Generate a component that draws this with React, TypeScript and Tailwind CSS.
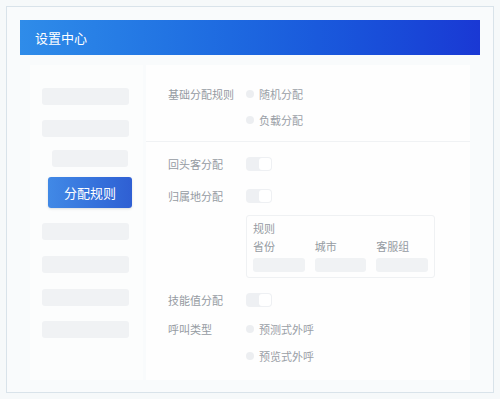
import React from "react";

const font = { fontFamily: "'Noto Sans CJK SC', 'Noto Sans', sans-serif" };

function Radio({ label }: { label: string }) {
  return (
    <div className="flex h-5 items-center gap-[5px]">
      <span className="h-[8px] w-[8px] rounded-full bg-[#eceef1]" />
      <span className="text-[11px] text-[#9aa0a7]">{label}</span>
    </div>
  );
}

function Toggle() {
  return (
    <div className="flex h-[14px] w-[26px] items-center justify-end rounded-[4px] bg-[#eef0f3] p-[1px]">
      <span className="h-[12px] w-[12px] rounded-[3px] bg-white" />
    </div>
  );
}

function Row({ label, children, className = "" }: { label: string; children: React.ReactNode; className?: string }) {
  return (
    <div className={`flex ${className}`}>
      <div className="flex h-5 w-[78px] shrink-0 items-center text-[11px] text-[#959ba2]">{label}</div>
      <div className="flex flex-col">{children}</div>
    </div>
  );
}

const bar = "h-[17px] rounded-[3px] bg-[#f0f2f4]";

export default function App() {
  return (
    <div className="h-[399px] w-[500px] bg-[#f6f9fa] p-[6px]" style={font}>
      <div className="flex h-[387px] flex-col border border-[#d9e3ea] bg-[#f9fbfc] px-[13px] pt-[13px]">
        {/* Header */}
        <div className="flex h-[35px] items-center bg-gradient-to-r from-[#2f8ce9] to-[#1a38d4] px-[15px] text-[13px] text-white">
          设置中心
        </div>

        <div className="flex flex-1 gap-[3px] px-[10px] pt-[10px]">
          {/* Sidebar */}
          <div className="flex h-[315px] w-[113px] flex-col bg-[#fcfdfd] pl-[12px]">
            <div className={`${bar} mt-[23px] w-[87px]`} />
            <div className={`${bar} mt-[15px] w-[87px]`} />
            <div className={`${bar} ml-[10px] mt-[13px] w-[76px]`} />
            <div className="ml-[6px] mt-[10px] flex h-[31px] w-[84px] items-center justify-center rounded-[3px] bg-gradient-to-r from-[#4189e6] to-[#2f5fd3] text-[13px] text-white shadow-sm">
              分配规则
            </div>
            <div className={`${bar} mt-[15px] w-[87px]`} />
            <div className={`${bar} mt-[16px] w-[87px]`} />
            <div className={`${bar} mt-[16px] w-[87px]`} />
            <div className={`${bar} mt-[15px] w-[87px]`} />
          </div>

          {/* Main */}
          <div className="flex h-[315px] flex-1 flex-col bg-[#fefefe]">
            <div className="pl-[22px] pt-[19px] pb-[11px]">
              <Row label="基础分配规则">
                <Radio label="随机分配" />
                <div className="mt-[6px]">
                  <Radio label="负载分配" />
                </div>
              </Row>
            </div>
            <div className="h-px bg-[#f0f2f4]" />
            <div className="flex flex-col pl-[22px] pt-[12px]">
              <Row label="回头客分配">
                <div className="flex h-5 items-center"><Toggle /></div>
              </Row>
              <Row label="归属地分配" className="mt-[12px]">
                <div className="flex h-5 items-center"><Toggle /></div>
                <div className="mt-[9px] flex w-[189px] flex-col rounded-[3px] border border-[#eff1f3] px-[6px] pb-[5px] pt-[5px] text-[11px] text-[#959ba2]">
                  <div className="leading-[14px]">规则</div>
                  <div className="mt-[4px] grid grid-cols-3 gap-x-[10px]">
                    <div className="leading-[14px]">省份</div>
                    <div className="leading-[14px]">城市</div>
                    <div className="leading-[14px]">客服组</div>
                    <div className="mt-[5px] h-[14px] rounded-[3px] bg-[#f0f2f4]" />
                    <div className="mt-[5px] h-[14px] rounded-[3px] bg-[#f0f2f4]" />
                    <div className="mt-[5px] h-[14px] rounded-[3px] bg-[#f0f2f4]" />
                  </div>
                </div>
              </Row>
              <Row label="技能值分配" className="mt-[12px]">
                <div className="flex h-5 items-center"><Toggle /></div>
              </Row>
              <Row label="呼叫类型" className="mt-[9px]">
                <Radio label="预测式外呼" />
                <div className="mt-[7px]">
                  <Radio label="预览式外呼" />
                </div>
              </Row>
            </div>
          </div>
        </div>
      </div>
    </div>
  );
}
